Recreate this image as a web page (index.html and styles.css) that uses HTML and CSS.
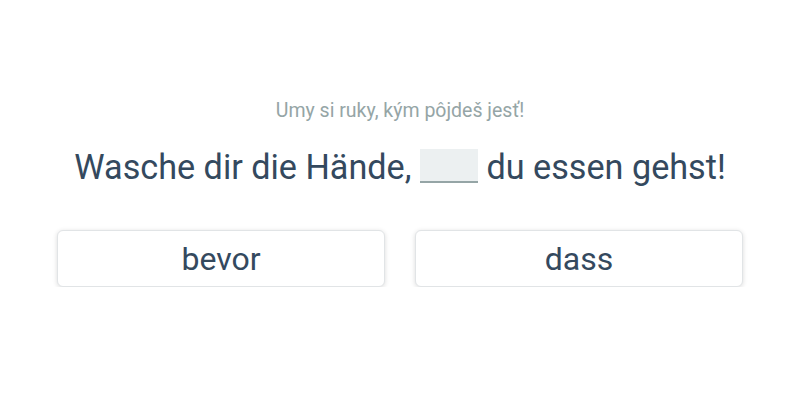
FILE: index.html
```html
<!DOCTYPE html>
<html lang="de">
    <head>
        <meta charset="UTF-8">
        <meta name="viewport" content="width=device-width, initial-scale=1.0">
        <title>Lückentext</title>
        <link rel="stylesheet" href="styles.css">
    </head>
    <body>
        <div class="exercise">
            <p class="hint">Umy si ruky, kým pôjdeš jesť!</p>
            <p class="sentence">Wasche dir die Hände, <span class="blank"></span> du essen gehst!</p>
            <div class="options">
                <button class="option">bevor</button>
                <button class="option">dass</button>
            </div>
        </div>
    </body>
</html>
```

FILE: styles.css
```css
body {
    margin: 0;
    font-family: Roboto, "Noto Sans", sans-serif;
    background-color: #ffffff;
    color: #34495e;
}
.exercise {
    max-width: 686px;
    margin: 0 auto;
    padding-top: 98px;
    text-align: center;
}
.hint {
    margin: 0;
    font-size: 19.5px;
    line-height: 26px;
    color: #95a5a6;
}
.sentence {
    margin: 19px 0 0;
    font-size: 34.2px;
    line-height: 48px;
}
.blank {
    display: inline-block;
    width: 58px;
    height: 32px;
    background-color: #ecf0f1;
    border-bottom: 2px solid #95a5a6;
    vertical-align: -4px;
}
.options {
    display: grid;
    grid-template-columns: 1fr 1fr;
    gap: 30px;
    margin-top: 39px;
}
.option {
    height: 57px;
    background-color: #ffffff;
    border: 1px solid #e1e4e6;
    border-radius: 6px;
    box-shadow: 0 1px 5px rgba(0, 0, 0, 0.14);
    font-family: inherit;
    font-size: 32px;
    color: #34495e;
    cursor: pointer;
}
```
